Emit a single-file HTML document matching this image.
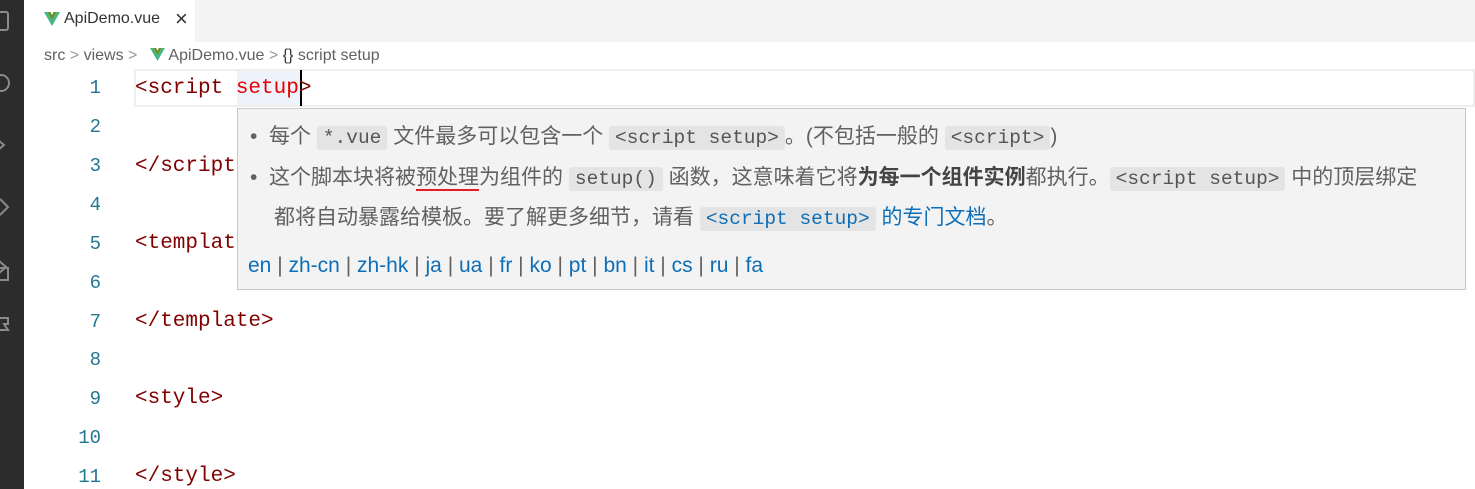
<!DOCTYPE html>
<html><head><meta charset="utf-8"><style>
*{margin:0;padding:0;box-sizing:border-box}
body{width:1475px;height:489px;background:#fff;position:relative;overflow:hidden;font-family:"Liberation Sans","Noto Sans CJK SC",sans-serif}
.act{position:absolute;left:0;top:0;width:24px;height:489px;background:#2c2c2c}
.tabbar{position:absolute;left:24px;top:0;right:0;height:42px;background:#f3f3f3}
.tab{position:absolute;left:24px;top:0;width:171px;height:42px;background:#fff;font-size:16px;color:#333}
.bc{position:absolute;left:44px;top:47px;font-size:16px;color:#616161;white-space:nowrap}
.ln{position:absolute;left:40px;width:61px;text-align:right;font-family:"Liberation Mono",monospace;font-size:19px;color:#237893}
.code{position:absolute;left:135px;font-family:"Liberation Mono","Courier New",monospace;font-size:21px;color:#800000;white-space:pre}
.hover{position:absolute;left:237px;top:108px;width:1229px;height:182px;background:#f3f3f3;border:1px solid #c8c8c8;font-size:21px;color:#616161;font-family:"Liberation Sans","Noto Sans CJK SC",sans-serif}
.row{position:absolute;left:12px;white-space:nowrap}
.c{font-family:"Liberation Mono",monospace;background:#e4e4e4;padding:1px 6px;border-radius:3px;font-size:19.5px;color:#555}
.bl{color:#0e6eb7}
b{color:#444}
</style></head><body>
<div class="act">
<svg width="24" height="489" style="position:absolute;left:0;top:0" fill="none" stroke="#8a8a8a" stroke-width="2">
<rect x="-4" y="12" width="12" height="18" rx="2"/>
<circle cx="1" cy="83" r="8"/>
<path d="M-2 140 l6 5 -6 5"/>
<path d="M0 199 l8 8 -8 8"/>
<path d="M-2 260 l8 7 -8 7 M-2 268 h10 v12 h-10"/>
<path d="M-2 318 h10 v6 h-4 l4 6 h-10"/>
</svg>
</div>
<div class="tabbar"></div>
<div class="tab">
<svg style="position:absolute;left:20px;top:12px" width="16" height="14" viewBox="0 0 16 14"><path d="M0 0h3.5L8 8 12.5 0H16L8 14z" fill="#41b883"/><path d="M3.5 0h3L8 3 9.5 0h3L8 8z" fill="#6b8e23"/></svg>
<span style="position:absolute;left:40px;top:10px">ApiDemo.vue</span>
<span style="position:absolute;left:151px;top:6px;font-size:22px">×</span>
</div>
<div class="bc">src <span style="color:#999">&gt;</span> views <span style="color:#999">&gt;</span>
<svg width="15" height="13" viewBox="0 0 16 14" style="vertical-align:-1px;margin-left:8px"><path d="M0 0h3.5L8 8 12.5 0H16L8 14z" fill="#41b883"/><path d="M3.5 0h3L8 3 9.5 0h3L8 8z" fill="#6b8e23"/></svg> ApiDemo.vue <span style="color:#999">&gt;</span> <span style="color:#333">{}</span> script setup</div>
<div style="position:absolute;left:134px;top:69px;width:1341px;height:38px;border:2px solid #eee"></div>
<div style="position:absolute;left:237px;top:71px;width:64px;height:34px;background:#eef2fb"></div>
<div style="position:absolute;left:300px;top:70px;width:2px;height:36px;background:#000"></div>
<div class="ln" style="top:77px">1</div>
<div class="ln" style="top:116px">2</div>
<div class="ln" style="top:155px">3</div>
<div class="ln" style="top:194px">4</div>
<div class="ln" style="top:233px">5</div>
<div class="ln" style="top:272px">6</div>
<div class="ln" style="top:311px">7</div>
<div class="ln" style="top:349px">8</div>
<div class="ln" style="top:388px">9</div>
<div class="ln" style="top:427px">10</div>
<div class="ln" style="top:466px">11</div>
<div class="code" style="top:77px">&lt;script <span style="color:#e50000">setup</span>&gt;</div>
<div class="code" style="top:155px">&lt;/script&gt;</div>
<div class="code" style="top:232px">&lt;template&gt;</div>
<div class="code" style="top:310px">&lt;/template&gt;</div>
<div class="code" style="top:387px">&lt;style&gt;</div>
<div class="code" style="top:465px">&lt;/style&gt;</div>
<div class="hover">
<div class="row" style="top:11px">•&nbsp; 每个 <span class="c">*.vue</span> 文件最多可以包含一个 <span class="c">&lt;script setup&gt;</span>。(不包括一般的 <span class="c">&lt;script&gt;</span>)</div>
<div class="row" style="top:52px">•&nbsp; 这个脚本块将被<span style="border-bottom:2px solid #e51c23">预处理</span>为组件的 <span class="c">setup()</span> 函数，这意味着它将<b>为每一个组件实例</b>都执行。<span class="c">&lt;script setup&gt;</span> 中的顶层绑定</div>
<div class="row" style="top:92px;left:36px">都将自动暴露给模板。要了解更多细节，请看 <span class="c bl">&lt;script setup&gt;</span> <span class="bl">的专门文档</span>。</div>
<div class="row bl" style="top:145px;left:10px">en <span style="color:#616161">|</span> zh-cn <span style="color:#616161">|</span> zh-hk <span style="color:#616161">|</span> ja <span style="color:#616161">|</span> ua <span style="color:#616161">|</span> fr <span style="color:#616161">|</span> ko <span style="color:#616161">|</span> pt <span style="color:#616161">|</span> bn <span style="color:#616161">|</span> it <span style="color:#616161">|</span> cs <span style="color:#616161">|</span> ru <span style="color:#616161">|</span> fa</div>
</div>
</body></html>
